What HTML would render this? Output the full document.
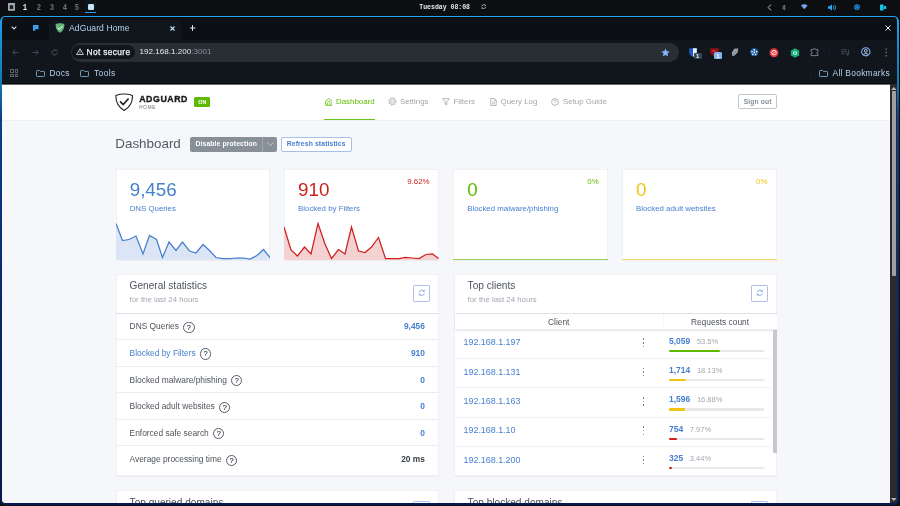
<!DOCTYPE html>
<html lang="en">
<head>
<meta charset="utf-8">
<title>AdGuard Home</title>
<style>
*{box-sizing:border-box;margin:0;padding:0}
html,body{width:900px;height:506px;overflow:hidden;background:#0d0f13;font-family:"Liberation Sans",sans-serif;}
body{position:relative}
#root{position:absolute;left:0;top:0;width:900px;height:506px;will-change:transform;transform:translateZ(0)}
.abs{position:absolute}
.t{position:absolute;white-space:nowrap;line-height:1}
/* top system bar */
#sysbar{left:0;top:0;width:900px;height:16px;background:#0c0e12}
#sysbar .n{position:absolute;top:4.1px;width:10px;margin-left:-5px;text-align:center;font-family:'Liberation Mono',monospace;font-size:8.6px;font-weight:bold;color:#6d737c;line-height:1;transform:scaleX(.84)}
/* window */
#win{left:0;top:16px;width:899px;height:489.3px;background:#0d1015;border-radius:5px;overflow:hidden}
#winborder{left:0;top:15.5px;width:899.3px;height:489.8px;border:2px solid transparent;border-left-width:2.2px;border-top-width:1.6px;border-bottom-width:2.6px;border-radius:5px;background:linear-gradient(180deg,#20a4ec 0%,#1a8fd4 5%,#1577b2 14%,#0b3f86 21%,#08276c 58%,#061a52 100%) border-box;-webkit-mask:linear-gradient(#000 0 0) padding-box,linear-gradient(#000 0 0);-webkit-mask-composite:xor;mask-composite:exclude;pointer-events:none;z-index:50}
#tabstrip{left:0;top:0;width:900px;height:24px;background:#0c0f14}
#toolbar{left:0;top:24px;width:900px;height:22px;background:#10161c}
#bookbar{left:0;top:46px;width:900px;height:22px;background:#10161c}
#omni{left:70.5px;top:26.5px;width:608px;height:19px;border-radius:9.5px;background:#272e34}
#chip{left:72.3px;top:29.2px;width:62.4px;height:14px;border-radius:7px;background:#10161c}
/* page */
#page{left:2px;top:68px;width:888px;height:420px;background:#f5f7fb;overflow:hidden;border-radius:0 0 0 3.5px;color:#495057}
#hdr{left:0;top:0;width:888px;height:35.600px;background:#fff;box-shadow:0 .5px 0 #e1e5ec}
.card{position:absolute;background:#fff;box-shadow:inset 0 0 0 .5px rgba(0,40,100,.13),0 .5px 1px rgba(0,0,0,.04)}
.sc{top:100.9px;width:154.8px;height:90.8px;overflow:hidden}
.bc{top:206px;width:322.6px;height:202.4px}
.nc{top:422px;width:322.6px;height:60px}
.num{left:14.2px;top:12.2px;font-size:18.8px}
.lbl{left:14.2px;top:36.5px;font-size:7.85px;color:#467fcf}
.pct{right:9.1px;top:9.4px;font-size:7.9px}
.chart{left:0;top:50.8px;width:155px;height:40px}
.ttl{left:13.6px;top:7.3px;font-size:10.1px;color:#4d545b}
.nc .ttl{top:8.2px}
.sub{left:13.6px;top:21.5px;font-size:7.83px;color:#a3a8b0}
.rb{left:297.2px;top:11.4px;width:16.4px;height:16.2px;border:1px solid #b0bfe8;border-radius:1.2px}
.rbi{left:301.6px;top:15.4px;width:7.6px;height:7.6px}
.th{top:44px;font-size:8.4px;color:#4d545b;transform:translateX(-50%)}
.nav{position:absolute;top:14.1px;font-size:7.9px;color:#a2a6ab;line-height:1;white-space:nowrap}
.row{position:absolute;left:0;width:100%;height:26.55px;border-top:1px solid #ebedf1}
.row .l{position:absolute;left:13.6px;top:8.9px;font-size:8.4px;line-height:1;white-space:nowrap;color:#4d545b}
.row .v{position:absolute;right:13.7px;top:8.9px;font-size:8.4px;line-height:1;font-weight:bold;color:#467fcf}
.q{display:inline-block;box-sizing:border-box;width:11.2px;height:11.2px;border:.85px solid #555c66;border-radius:50%;font-size:7.4px;font-style:normal;line-height:9.3px;text-align:center;color:#3e444c;-webkit-text-stroke:.15px #3e444c;vertical-align:-.4px;margin-left:4.4px;margin-top:-3px;margin-bottom:-3px}
.crow{position:absolute;left:0;width:318px;height:29.3px;border-top:1px solid #f0f2f5}
.crow .ip{position:absolute;left:9.6px;top:8.6px;font-size:8.9px;line-height:1;color:#467fcf}
.crow .cnt{position:absolute;left:215px;top:7.05px;font-size:8.5px;line-height:1;font-weight:bold;color:#467fcf;white-space:nowrap}
.crow .pc{font-size:7.5px;font-weight:normal;color:#a3a8b0;margin-left:6.6px}
.crow .bar{position:absolute;left:215px;top:19.9px;width:95px;height:2.4px;background:#e6e8eb;border-radius:1.2px}
.crow .bar i{position:absolute;left:0;top:0;height:100%;border-radius:1.2px}
.crow .dots{position:absolute;left:188.5px;top:8.7px;width:1.5px}
.crow .dots b{display:block;width:1.45px;height:1.45px;background:#646b75;border-radius:50%;margin-bottom:2.2px}
</style>
</head>
<body>
<div id="root">
<!-- system bar -->
<div id="sysbar" class="abs">
  <svg class="abs" style="left:8px;top:3px" width="7.4" height="7.8" viewBox="0 0 7.400 7.800"><rect x="0" y="0" width="7.400" height="7.800" rx=".6" fill="#a3adb6"/><rect x="1.700" y="2.200" width="3.300" height="3.800" fill="#1a1f26"/><rect x="5" y="1.200" width="1.200" height="5.400" fill="#8a949d"/></svg>
  <span class="n" style="left:25.4px;color:#e8ebef">1</span>
  <span class="n" style="left:38.5px">2</span>
  <span class="n" style="left:51.5px">3</span>
  <span class="n" style="left:64.6px">4</span>
  <span class="n" style="left:77.4px">5</span>
  <div class="abs" style="left:85px;top:0;width:11px;height:12px;background:#0c141a"></div><div class="abs" style="left:88.2px;top:4.2px;width:5.4px;height:5.4px;border-radius:1.2px;background:#c5e3fd"></div>
  <div class="abs" style="left:85px;top:11.7px;width:11px;height:1.6px;background:#2497f3"></div>
  <span class="t" style="left:419.3px;top:4.9px;font-size:6.5px;font-weight:bold;color:#e6e9ee;font-family:'Liberation Mono',monospace">Tuesday 08:08</span>
  <svg class="abs" style="left:481.2px;top:3.9px" width="5.4" height="5.4" viewBox="0 0 6 6"><path d="M.9 2.7A2.1 2.1 0 0 1 4.7 1.6M5.1 3.3A2.1 2.1 0 0 1 1.3 4.4" fill="none" stroke="#d5dae2" stroke-width=".8"/><path d="M5.3.5v1.6H3.7zM.7 5.5V3.9h1.6z" fill="#d5dae2"/></svg>
  <svg class="abs" style="left:767px;top:4px" width="5" height="7" viewBox="0 0 5 7"><path d="M4 .6L1.2 3.5 4 6.4" fill="none" stroke="#a9c4e4" stroke-width="1"/></svg>
  <svg class="abs" style="left:781.5px;top:4px" width="4" height="7" viewBox="0 0 4 7"><path d="M.5 2L3.3 4.8 2 6V1l1.3 1.2L.5 5" fill="none" stroke="#a4aab4" stroke-width=".6"/></svg>
  <svg class="abs" style="left:801px;top:4.2px" width="6.6" height="5.4" viewBox="0 0 8 6"><path d="M0 1.5 Q4 -1.5 8 1.5 L4 6 Z" fill="#7aa8f0"/></svg>
  <svg class="abs" style="left:828px;top:3.5px" width="9" height="7" viewBox="0 0 9 7"><path d="M0 2.3h1.8L4 .3v6.4L1.8 4.7H0z" fill="#2aa9f0"/><path d="M5.3 1.8q1.2 1.7 0 3.4M6.7 .8q2 2.7 0 5.4" stroke="#2aa9f0" stroke-width=".9" fill="none"/></svg>
  <svg class="abs" style="left:854px;top:4px" width="6" height="6" viewBox="0 0 6 6"><circle cx="3" cy="3" r="2.3" fill="#0f3a5c" stroke="#1b8fe0" stroke-width="1.1"/><rect x="2.1" y="2.1" width="1.8" height="1.8" fill="#1b8fe0"/></svg>
  <svg class="abs" style="left:880px;top:3.5px" width="7" height="7" viewBox="0 0 7 7"><rect x="0" y="0.5" width="3.6" height="6" rx=".6" fill="#18c3e8"/><rect x="4" y="2" width="2.2" height="3" fill="#18c3e8"/></svg>
</div>

<div id="win" class="abs">
  <div id="tabstrip" class="abs">
    <svg class="abs" style="left:10.5px;top:10px" width="6" height="4" viewBox="0 0 6 4"><path d="M.7.7L3 3l2.3-2.3" fill="none" stroke="#cfe0f4" stroke-width="1.1"/></svg>
    <div class="abs" style="left:49px;top:3.5px;width:132px;height:21px;border-radius:4px 4px 0 0;background:#10161c"></div>
    <div class="abs" style="left:24px;top:3px;width:24px;height:18px;border-radius:4px;background:#0c0f13"></div>
    <svg class="abs" style="left:33px;top:9px" width="6" height="6" viewBox="0 0 6 6"><path d="M0 0h5.5v4.800L4.300 4 2.300 4.300V5.800H0z" fill="#3aa0f2"/></svg>
    <svg class="abs" style="left:55px;top:6.5px" width="10" height="10" viewBox="0 0 10 10"><path d="M5 .3C3.4.3 1.6.7.6 1.2c0 3 .6 6.300 4.400 8.500C8.800 7.500 9.400 4.200 9.400 1.200 8.400.7 6.600.3 5 .3z" fill="#67b279"/><path d="M2.700 4.700L4.400 6.400 7.500 3" fill="none" stroke="#fff" stroke-width="1"/></svg>
    <span class="t" style="left:69px;top:8px;font-size:8.6px;letter-spacing:.08px;color:#b4d0ee">AdGuard Home</span>
    <svg class="abs" style="left:170px;top:9.500px" width="5" height="5" viewBox="0 0 5 5"><path d="M.5.5l4 4M4.500.5l-4 4" stroke="#c4e2f6" stroke-width="1.100"/></svg>
    <svg class="abs" style="left:190px;top:9px" width="6" height="6" viewBox="0 0 6 6"><path d="M2.500 .1v5.800M-.2 3h5.600" stroke="#d6e6f6" stroke-width="1"/></svg>
    <svg class="abs" style="left:884.8px;top:8.7px" width="6" height="6" viewBox="0 0 6 6"><path d="M.5.5l5 5M5.5.5l-5 5" stroke="#eef2f6" stroke-width="1"/></svg>
  </div>
  <div id="toolbar" class="abs"></div>
  <div id="bookbar" class="abs"></div>
  <!-- toolbar items -->
  <svg class="abs" style="left:11.5px;top:32.5px" width="7" height="7" viewBox="0 0 7 7"><path d="M6.5 3.5H.8M3.400.7L.7 3.5l2.7 2.800" fill="none" stroke="#465060" stroke-width=".9"/></svg>
  <svg class="abs" style="left:31.5px;top:32.5px" width="7" height="7" viewBox="0 0 7 7"><path d="M.5 3.5h5.700M3.600.7l2.700 2.800-2.700 2.800" fill="none" stroke="#465060" stroke-width=".9"/></svg>
  <svg class="abs" style="left:51.2px;top:32.7px" width="7" height="7" viewBox="0 0 7 7"><path d="M6 3.500A2.500 2.500 0 1 1 5.200 1.700" fill="none" stroke="#525b68" stroke-width=".9"/><path d="M4.300.5h2v2z" fill="#4a525f"/></svg>
  <div id="omni" class="abs"></div>
  <div id="chip" class="abs"></div>
  <svg class="abs" style="left:75.500px;top:32px" width="8" height="7" viewBox="0 0 8 7"><path d="M4 .7L7.400 6.500H.6z" fill="none" stroke="#e8edf3" stroke-width=".8" stroke-linejoin="round"/><path d="M4 2.800v1.800M4 5.200v.6" stroke="#e8edf3" stroke-width=".7"/></svg>
  <span class="t" style="left:86.5px;top:31.500px;font-size:8.400px;letter-spacing:.35px;-webkit-text-stroke:.25px #eef2f6;color:#eef2f6">Not secure</span>
  <span class="t" style="left:139.6px;top:31.8px;font-size:8.1px;color:#e4e9ef">192.168.1.200<span style="color:#8a93a0">:3001</span></span>
  <svg class="abs" style="left:661px;top:31.500px" width="9" height="9" viewBox="0 0 10 10"><path d="M5 .5l1.400 3 3.200.4-2.400 2.200.7 3.200L5 7.700 2.100 9.300l.7-3.200L.4 3.900l3.200-.4z" fill="#8ab4f8"/></svg>
  <!-- extensions -->
  <svg class="abs" style="left:688.6px;top:32px" width="8" height="9" viewBox="0 0 8 9"><path d="M.2.200h7.600v4.600c0 2.100-2.200 3.400-3.800 4C2.400 8.200 .2 6.900 .2 4.800z" fill="#2257c9"/><path d="M4 .200h3.800v4.600c0 2.100-2.200 3.400-3.800 4z" fill="#e9effd"/></svg><div class="abs" style="left:693.6px;top:36.800px;width:8px;height:6.600px;border-radius:1.300px;background:#2f4757"></div><span class="t" style="left:695.900px;top:37.500px;font-size:5.800px;font-weight:bold;color:#fff">1</span>
  <svg class="abs" style="left:709.5px;top:31.500px" width="9" height="8.500" viewBox="0 0 9 8.500"><path d="M.2.200h8.600v4.100c0 2.100-2.400 3.400-4.300 4C2.600 7.700 .2 6.400 .2 4.300z" fill="#8c1218"/><path d="M2.200 2.800h3.600" stroke="#e0494f" stroke-width="1"/></svg><div class="abs" style="left:713.700px;top:36.200px;width:8.400px;height:7px;border-radius:1.500px;background:#86b2f6"></div><span class="t" style="left:716.300px;top:37px;font-size:6px;font-weight:bold;color:#fff">1</span>
  <svg class="abs" style="left:730.500px;top:32px" width="8" height="8.500" viewBox="0 0 8 8.500"><path d="M1.300 8L.8 4.800 3.200 .7Q5.500 .2 7.300 .5L6.600 4.400 3.400 7.800z" fill="#9aa0a7"/><path d="M1.300 8L5.200 2.500" stroke="#6d737b" stroke-width=".5"/></svg>
  <svg class="abs" style="left:750px;top:31.800px" width="8.600" height="8.600" viewBox="0 0 8.600 8.600"><circle cx="4.300" cy="4.300" r="4.200" fill="#1d5c9c"/><circle cx="4.300" cy="4.300" r=".9" fill="#eaf2fb"/><circle cx="4.300" cy="1.900" r=".85" fill="#eaf2fb"/><circle cx="2" cy="3.600" r=".85" fill="#eaf2fb"/><circle cx="6.600" cy="3.600" r=".85" fill="#eaf2fb"/><circle cx="2.900" cy="6.300" r=".85" fill="#eaf2fb"/><circle cx="5.700" cy="6.300" r=".85" fill="#eaf2fb"/></svg>
  <svg class="abs" style="left:769px;top:31.500px" width="10" height="10" viewBox="0 0 10 10"><circle cx="5" cy="4.700" r="4.500" fill="#e8323c"/><circle cx="5" cy="4.700" r="2.300" fill="none" stroke="#fff" stroke-width=".9"/><path d="M3.400 6.300L6.600 3.100" stroke="#fff" stroke-width=".9"/></svg>
  <svg class="abs" style="left:790px;top:31.500px" width="10" height="10" viewBox="0 0 10 10"><path d="M5 .3l4.200 2.300v4.800L5 9.700.8 7.400V2.600z" fill="#19a974"/><rect x="3.200" y="3.400" width="3.600" height="3.200" rx=".5" fill="#e6fff4"/><circle cx="5" cy="5" r=".9" fill="#19a974"/></svg>
  <svg class="abs" style="left:810.3px;top:31px" width="9.500" height="9.500" viewBox="0 0 9.500 9.500"><path d="M1 2.600h2.300a1.150 1.150 0 1 1 2.300 0H8v2a1.150 1.150 0 1 0 0 2.300V8.600H1V6.900a1.100 1.100 0 1 0 0-2.200z" fill="none" stroke="#788492" stroke-width=".95" stroke-linejoin="round"/></svg>
  <div class="abs" style="left:829.3px;top:30px;width:.8px;height:12px;background:#161b21"></div>
  <svg class="abs" style="left:841.300px;top:32.500px" width="9" height="7" viewBox="0 0 9 7"><path d="M0 .8h6.200M0 2.800h6.200M0 4.800h3.600" stroke="#48515e" stroke-width=".9"/><path d="M7.600 .6v4.600" stroke="#48515e" stroke-width=".9"/><circle cx="6.600" cy="5.400" r="1.100" fill="#48515e"/></svg>
  <svg class="abs" style="left:861.100px;top:31.400px" width="9.600" height="9.600" viewBox="0 0 9.600 9.600"><circle cx="4.800" cy="4.800" r="4.100" fill="none" stroke="#86b1f7" stroke-width="1.100"/><circle cx="4.800" cy="3.800" r="1.400" fill="none" stroke="#cfe0fb" stroke-width=".9"/><path d="M2.200 7.600q2.600-2.600 5.200 0" fill="none" stroke="#cfe0fb" stroke-width=".9"/></svg>
  <svg class="abs" style="left:884.700px;top:31.800px" width="2.400" height="8.800" viewBox="0 0 2.400 8.800"><circle cx="1.200" cy="1.100" r=".95" fill="#57606d"/><circle cx="1.200" cy="4.400" r=".95" fill="#57606d"/><circle cx="1.200" cy="7.700" r=".95" fill="#57606d"/></svg>
  <!-- bookmarks bar -->
  <div class="abs" style="left:10px;top:53px;width:3.5px;height:3.5px;border:1px solid #55606c;box-sizing:border-box"></div><div class="abs" style="left:14.7px;top:53px;width:3.5px;height:3.5px;border:1px solid #55606c;box-sizing:border-box"></div><div class="abs" style="left:10px;top:57.7px;width:3.5px;height:3.5px;border:1px solid #55606c;box-sizing:border-box"></div><div class="abs" style="left:14.7px;top:57.7px;width:3.5px;height:3.5px;border:1px solid #55606c;box-sizing:border-box"></div>
  <div class="abs" style="left:26px;top:51px;width:1px;height:11px;background:#141920"></div>
  <svg class="abs" style="left:36px;top:53.500px" width="9" height="7" viewBox="0 0 9 7"><path d="M.5 1.200q0-.7.7-.7h2.300l.9.900h3.400q.7 0 .7.700v3.700q0 .7-.7.700H1.200q-.7 0-.7-.7z" fill="none" stroke="#7fa8c9" stroke-width=".9"/></svg>
  <span class="t" style="left:49.500px;top:53px;font-size:8.400px;letter-spacing:.3px;color:#b6d1ee">Docs</span>
  <svg class="abs" style="left:80px;top:53.500px" width="9" height="7" viewBox="0 0 9 7"><path d="M.5 1.200q0-.7.7-.7h2.300l.9.900h3.400q.7 0 .7.700v3.700q0 .7-.7.700H1.200q-.7 0-.7-.7z" fill="none" stroke="#7fa8c9" stroke-width=".9"/></svg>
  <span class="t" style="left:94px;top:53px;font-size:8.400px;letter-spacing:.4px;color:#b6d1ee">Tools</span>
  <div class="abs" style="left:809.500px;top:51px;width:1px;height:11px;background:#181d24"></div>
  <svg class="abs" style="left:819px;top:53.500px" width="9" height="7" viewBox="0 0 9 7"><path d="M.5 1.200q0-.7.7-.7h2.300l.9.900h3.400q.7 0 .7.700v3.700q0 .7-.7.700H1.200q-.7 0-.7-.7z" fill="none" stroke="#7fa8c9" stroke-width=".9"/></svg>
  <span class="t" style="left:832.500px;top:53px;font-size:8.400px;letter-spacing:.3px;color:#b6d1ee">All Bookmarks</span>

  <!-- PAGE -->
  <div id="page" class="abs">
    <div id="hdr" class="abs">
      <svg class="abs" style="left:113px;top:8.5px" width="18.4" height="18.4" viewBox="0 0 18.4 18.4"><path d="M9.200 1C6.500 1 3.300 1.500 .9 2.400.7 8 2 13.200 9.200 17.500 16.400 13.200 17.700 8 17.500 2.400 15.100 1.500 11.900 1 9.200 1z" fill="#fff" stroke="#232323" stroke-width="1.100"/><path d="M5 8.300l3.200 3.200 5.400-6" fill="none" stroke="#232323" stroke-width="1.700"/></svg>
      <span class="t" style="left:137.2px;top:10.9px;font-size:8.8px;font-weight:bold;color:#1a1a1a;letter-spacing:.55px;-webkit-text-stroke:.35px #1a1a1a">ADGUARD</span>
      <span class="t" style="left:137.3px;top:22.2px;font-size:4.600px;color:#6a6a6a;letter-spacing:.75px">HOME</span>
      <div class="abs" style="left:192.100px;top:13.100px;width:16px;height:9.600px;border-radius:1.500px;background:#5eba00"></div>
      <span class="t" style="left:196.300px;top:15.600px;font-size:5.400px;font-weight:bold;color:#fff">ON</span>

      <svg class="abs" style="left:322.700px;top:13.700px" width="7.600" height="7.900" viewBox="0 0 7.600 7.900"><path d="M.6 3.200L3.800 .6 7 3.200V7.300H.6z" fill="none" stroke="#5eba00" stroke-width=".8" stroke-linejoin="round"/><path d="M2.600 7.300V4.500Q2.600 3.400 3.800 3.400 5 3.400 5 4.500V7.300" fill="none" stroke="#5eba00" stroke-width=".7"/></svg>
      <span class="nav" style="left:334px;color:#5eba00">Dashboard</span>
      <div class="abs" style="left:322px;top:34.600px;width:51px;height:1px;background:#6cc31a"></div>
      <svg class="abs" style="left:385.800px;top:13.300px" width="8.800" height="8.800" viewBox="0 0 8.800 8.800"><circle cx="4.400" cy="4.400" r="3.650" fill="none" stroke="#a2a6ab" stroke-width=".9" stroke-dasharray="1.430 1.430"/><circle cx="4.400" cy="4.400" r="3" fill="none" stroke="#a2a6ab" stroke-width=".7"/><circle cx="4.400" cy="4.400" r="1.300" fill="none" stroke="#a2a6ab" stroke-width=".7"/></svg>
      <span class="nav" style="left:398px">Settings</span>
      <svg class="abs" style="left:439.500px;top:14px" width="8" height="8" viewBox="0 0 8 8"><path d="M.6.700h6.800L4.800 3.900v3L3.200 6.100V3.900z" fill="none" stroke="#a2a6ab" stroke-width=".8" stroke-linejoin="round"/></svg>
      <span class="nav" style="left:451.500px">Filters</span>
      <svg class="abs" style="left:488px;top:13.600px" width="7" height="8" viewBox="0 0 7 8"><path d="M.8.500h3.400l2 2v5H.8z" fill="none" stroke="#a2a6ab" stroke-width=".8" stroke-linejoin="round"/><path d="M4.200.5v2h2M2 4.300h3M2 5.800h3" fill="none" stroke="#a2a6ab" stroke-width=".6"/></svg>
      <span class="nav" style="left:498.500px">Query Log</span>
      <svg class="abs" style="left:548.500px;top:13.600px" width="8" height="8" viewBox="0 0 8 8"><circle cx="4" cy="4" r="3.400" fill="none" stroke="#a2a6ab" stroke-width=".8"/><path d="M3 3.200q0-1 1-1t1 1q0 .6-1 1.100v.5" fill="none" stroke="#a2a6ab" stroke-width=".7"/><circle cx="4" cy="5.800" r=".4" fill="#a2a6ab"/></svg>
      <span class="nav" style="left:561px">Setup Guide</span>
      <div class="abs" style="left:736.300px;top:10.200px;width:38.800px;height:14.700px;border:1px solid #c3c7cd;border-radius:2px;background:#fff"></div>
      <span class="t" style="left:741.700px;top:15.1px;font-size:6.700px;font-weight:bold;color:#868e96;letter-spacing:.15px">Sign out</span>
    </div>

    <div class="abs" id="content" style="left:0;top:-16px;width:888px;height:0">
    <span class="t" style="left:113.3px;top:68.8px;font-size:13.4px;color:#525a62">Dashboard</span>
    <div class="abs" style="left:188px;top:69px;width:87px;height:14.6px;border-radius:2px;background:#878f97"></div>
    <div class="abs" style="left:260px;top:69px;width:.7px;height:14.6px;background:#a0a7ae"></div>
    <span class="t" style="left:193.500px;top:72.9px;font-size:6.800px;font-weight:bold;color:#fff;letter-spacing:.12px">Disable protection</span>
    <svg class="abs" style="left:264.8px;top:74px" width="6.8" height="4.4" viewBox="0 0 6.8 4.400"><path d="M.5.500L3.400 3.600 6.300.5" fill="none" stroke="#dde0e4" stroke-width=".7"/></svg>
    <div class="abs" style="left:279px;top:69px;width:70.5px;height:14.6px;border:1px solid #a5c0ea;border-radius:2px;background:#fff"></div>
    <span class="t" style="left:284.800px;top:72.9px;font-size:6.800px;font-weight:bold;color:#467fcf;letter-spacing:.12px">Refresh statistics</span>

    <!-- stat cards -->
    <div class="card sc" style="left:113.5px">
      <span class="t num" style="color:#467fcf">9,456</span>
      <span class="t lbl">DNS Queries</span>
      <svg class="abs chart" viewBox="0 0 155 40" preserveAspectRatio="none"><path id="g1" d="M0 3.500L6.500 20.500 13 19.500 20 16 27 34 33.500 15.500 40.500 19.500 46.500 37.500 53 22 60 30.500 66.500 22 73.500 31 80 33 87 24.500 93.500 30.500 100 37.500 107 38.500 114 38.500 120.500 38 127.500 38 134 39 141 35.500 147.500 29.500 154.500 38 V40H0z" fill="#dbe5f5"/><path d="M0 3.500L6.500 20.500 13 19.500 20 16 27 34 33.500 15.500 40.500 19.500 46.500 37.500 53 22 60 30.500 66.500 22 73.500 31 80 33 87 24.500 93.500 30.500 100 37.500 107 38.500 114 38.500 120.500 38 127.500 38 134 39 141 35.500 147.500 29.500 154.500 38" fill="none" stroke="#467fcf" stroke-width="1.25"/></svg>
    </div>
    <div class="card sc" style="left:281.9px">
      <span class="t num" style="color:#cd201f">910</span>
      <span class="t lbl">Blocked by Filters</span>
      <span class="t pct" style="color:#cd201f">9.62%</span>
      <svg class="abs chart" viewBox="0 0 155 40" preserveAspectRatio="none"><path d="M0 7L7 30 13.500 36 20.500 27 27 34 34 3.500 41 24 47.500 38.500 54.500 29.500 61 34 67.500 7 74.500 31 81 32.500 87.500 27 94.500 17.500 101.500 38.500 108 38.500 115 38.500 121.500 37.500 128.500 38 135 38.500 142 34.500 148.500 34 154.500 38.500V40H0z" fill="#f5d2d2"/><path d="M0 7L7 30 13.500 36 20.500 27 27 34 34 3.500 41 24 47.500 38.500 54.500 29.500 61 34 67.500 7 74.500 31 81 32.500 87.500 27 94.500 17.500 101.500 38.500 108 38.500 115 38.500 121.500 37.500 128.500 38 135 38.500 142 34.500 148.500 34 154.500 38.500" fill="none" stroke="#cd201f" stroke-width="1.25"/></svg>
    </div>
    <div class="card sc" style="left:451px">
      <span class="t num" style="color:#5eba00">0</span>
      <span class="t lbl">Blocked malware/phishing</span>
      <span class="t pct" style="color:#5eba00">0%</span>
      <div class="abs" style="left:0;bottom:0;width:100%;height:1.2px;background:#95d357"></div>
    </div>
    <div class="card sc" style="left:619.8px">
      <span class="t num" style="color:#f1c40f">0</span>
      <span class="t lbl">Blocked adult websites</span>
      <span class="t pct" style="color:#f1c40f">0%</span>
      <div class="abs" style="left:0;bottom:0;width:100%;height:1.2px;background:#f5da68"></div>
    </div>

    <!-- general statistics -->
    <div class="card bc" style="left:114px">
      <span class="t ttl">General statistics</span>
      <span class="t sub">for the last 24 hours</span>
      <div class="abs rb"></div>
      <svg class="abs rbi" viewBox="0 0 8 8"><path d="M1.300 3.600A2.800 2.800 0 0 1 6.300 2.300M6.700 4.400A2.800 2.800 0 0 1 1.700 5.700" fill="none" stroke="#5c8ad6" stroke-width=".7"/><path d="M6.700.9v1.700H5M1.300 7.100V5.400H3" fill="none" stroke="#5a8ad4" stroke-width=".65"/></svg>
      <div class="row" style="top:38.60px;border-top-color:#dde1e8"><span class="l">DNS Queries<i class="q">?</i></span><span class="v">9,456</span></div>
      <div class="row" style="top:65.15px"><span class="l" style="color:#467fcf">Blocked by Filters<i class="q">?</i></span><span class="v">910</span></div>
      <div class="row" style="top:91.70px"><span class="l">Blocked malware/phishing<i class="q">?</i></span><span class="v">0</span></div>
      <div class="row" style="top:118.25px"><span class="l">Blocked adult websites<i class="q">?</i></span><span class="v">0</span></div>
      <div class="row" style="top:144.80px"><span class="l">Enforced safe search<i class="q">?</i></span><span class="v">0</span></div>
      <div class="row" style="top:171.35px"><span class="l">Average processing time<i class="q">?</i></span><span class="v" style="color:#3a4046">20 ms</span></div>
    </div>

    <!-- top clients -->
    <div class="card bc" style="left:452px;overflow:hidden">
      <span class="t ttl">Top clients</span>
      <span class="t sub">for the last 24 hours</span>
      <div class="abs rb"></div>
      <svg class="abs rbi" viewBox="0 0 8 8"><path d="M1.300 3.600A2.800 2.800 0 0 1 6.300 2.300M6.700 4.400A2.800 2.800 0 0 1 1.700 5.700" fill="none" stroke="#5c8ad6" stroke-width=".7"/><path d="M6.700.9v1.700H5M1.300 7.100V5.400H3" fill="none" stroke="#5a8ad4" stroke-width=".65"/></svg>
      <div class="abs" style="left:0;top:54.8px;width:324px;height:147px">
        <div class="crow" style="top:0;border-top-color:transparent"><span class="ip">192.168.1.197</span><div class="dots"><b></b><b></b><b></b></div><span class="cnt">5,059<span class="pc">53.5%</span></span><div class="bar"><i style="width:53.5%;background:#5eba00"></i></div></div>
        <div class="crow" style="top:29.3px"><span class="ip">192.168.1.131</span><div class="dots"><b></b><b></b><b></b></div><span class="cnt">1,714<span class="pc">18.13%</span></span><div class="bar"><i style="width:18.13%;background:#f1c40f"></i></div></div>
        <div class="crow" style="top:58.6px"><span class="ip">192.168.1.163</span><div class="dots"><b></b><b></b><b></b></div><span class="cnt">1,596<span class="pc">16.88%</span></span><div class="bar"><i style="width:16.88%;background:#f1c40f"></i></div></div>
        <div class="crow" style="top:87.9px"><span class="ip">192.168.1.10</span><div class="dots"><b></b><b></b><b></b></div><span class="cnt">754<span class="pc">7.97%</span></span><div class="bar"><i style="width:7.97%;background:#cd201f"></i></div></div>
        <div class="crow" style="top:117.2px"><span class="ip">192.168.1.200</span><div class="dots"><b></b><b></b><b></b></div><span class="cnt">325<span class="pc">3.44%</span></span><div class="bar"><i style="width:3.44%;background:#cd201f"></i></div></div>
      </div>
      <div class="abs" style="left:0.5px;top:38.6px;width:323px;height:16.6px;background:#fff;border-top:1px solid #dde1e8;box-shadow:0 1.5px 3px rgba(0,0,0,.11)"></div>
      <div class="abs" style="left:209px;top:39.6px;width:1px;height:14.8px;background:#f6f7f9"></div>
      <span class="t th" style="left:104.7px">Client</span>
      <span class="t th" style="left:266px">Requests count</span>
      <div class="abs" style="left:319px;top:56px;width:4px;height:123px;background:#c6c8cc"></div>
    </div>

    <!-- next cards -->
    <div class="card nc" style="left:114px">
      <span class="t ttl">Top queried domains</span>
      <div class="abs rb"></div>
    </div>
    <div class="card nc" style="left:452px">
      <span class="t ttl">Top blocked domains</span>
      <div class="abs rb"></div>
    </div>
    </div>
  </div>
  <div class="abs" style="left:0;top:67px;width:899px;height:1px;background:#0a0c10"></div>
  <div class="abs" style="left:0;top:68px;width:899px;height:1px;background:rgba(10,12,16,.62)"></div>
  <!-- scrollbar -->
  <div class="abs" style="left:890px;top:68px;width:8px;height:420px;background:#2b2b2b"></div>
  <div class="abs" style="left:892.3px;top:74.8px;width:3.6px;height:185.5px;background:#a0a0a0;border-radius:.8px"></div>
  <svg class="abs" style="left:891.3px;top:70.8px" width="5.6" height="3" viewBox="0 0 6 3"><path d="M0 3L3 0l3 3z" fill="#b5b5b5"/></svg>
  <svg class="abs" style="left:891.3px;top:482.2px" width="5.6" height="3" viewBox="0 0 6 3"><path d="M0 0h6L3 3z" fill="#b5b5b5"/></svg>
</div>
<div id="winborder" class="abs"></div>
</div>
</body>
</html>
